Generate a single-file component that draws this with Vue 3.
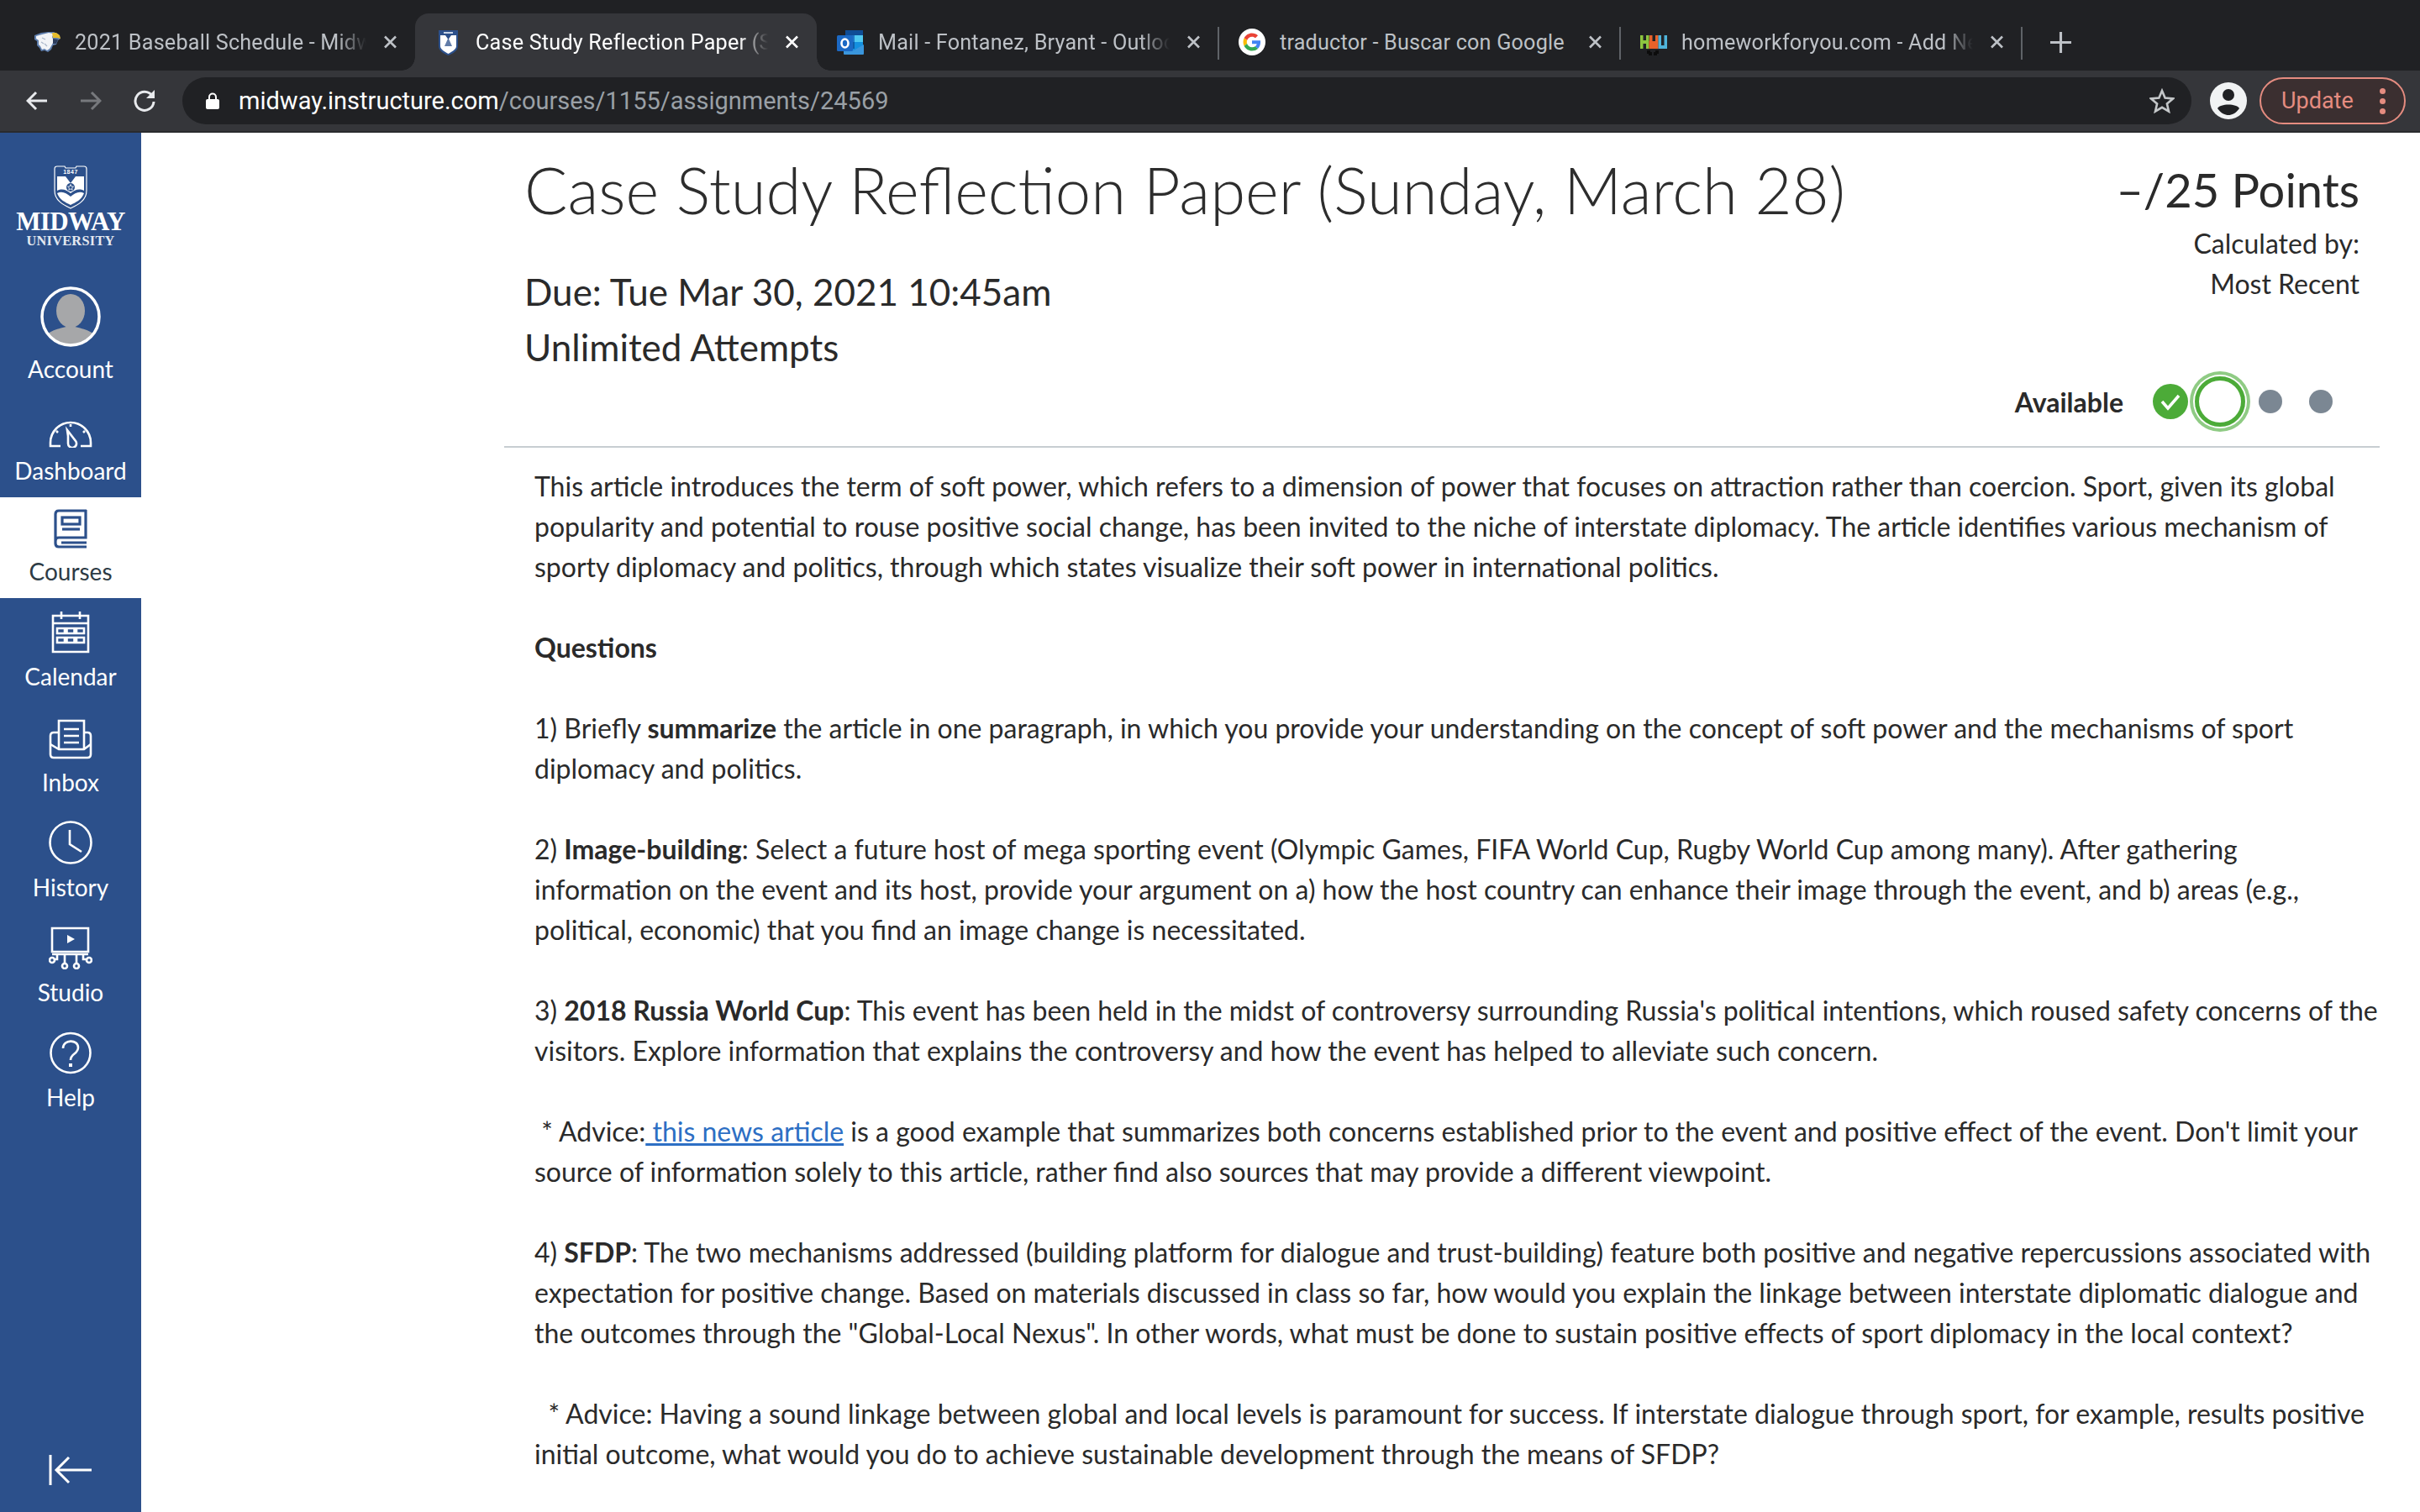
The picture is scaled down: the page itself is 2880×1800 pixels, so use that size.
<script setup>
const tabs = [
  { title: '2021 Baseball Schedule - Midway University Athletics', icon: 'eagle' },
  { title: 'Case Study Reflection Paper (Sunday, March 28)', icon: 'shield', active: true },
  { title: 'Mail - Fontanez, Bryant - Outlook Web', icon: 'outlook' },
  { title: 'traductor - Buscar con Google', icon: 'google', plain: true },
  { title: 'homeworkforyou.com - Add New Post', icon: 'hw' }
]
</script>

<template>
  <div class="screen">
    <header class="tabstrip">
      <div v-for="t in tabs" :key="t.icon" class="tab" :class="{ active: t.active, sep: t.icon === 'google' || t.icon === 'hw' || t.icon === 'outlook' }">
        <svg v-if="t.icon === 'eagle'" class="fav" viewBox="0 0 32 32">
          <path d="M1 8 L9 5 L17 4 L24 4 L30 7 L32 12 L29 14 L27 19 L23 20 L21 25 L17 28 L13 26 L9 27 L7 23 L4 20 L4 15 L1 13Z" fill="#5f7fae" />
          <path d="M3 9 L10 7 L18 5 L24 6 L22 10 L24 15 L22 19 L19 24 L16 26 L13 24 L10 25 L8 21 L6 19 L6 14 L3 12Z" fill="#f2f4f7" />
          <path d="M22 5 L27 5 L31 8 L32 12 L28 11 L23 11Z" fill="#e6bd2e" />
          <path d="M23 12 L29 13 L27 18 L23 18Z" fill="#2d3d5c" />
          <path d="M10 11 L14 13 M9 16 L12 18 M13 18 L16 21" stroke="#a9b6c9" stroke-width="1.200" fill="none" />
        </svg>
        <svg v-else-if="t.icon === 'shield'" class="fav shield" viewBox="0 0 23 31">
          <path d="M0 1 H23 V20 C23 26 16 29 11.500 31 C7 29 0 26 0 20Z" fill="#2c508b" />
          <path d="M2 7 H8 L11.500 12 L15 7 H21 V20 C21 24 15 27 11.500 29 C8 27 2 24 2 20Z" fill="#fff" />
          <path d="M11.500 10 L16 20 H7Z" fill="#2c508b" opacity=".75" />
          <path d="M6 3 H17 V5 H6Z" fill="#c7d3e6" />
        </svg>
        <svg v-else-if="t.icon === 'outlook'" class="fav" viewBox="0 0 32 32">
          <rect x="10" y="2" width="21" height="25" rx="1" fill="#1490df" />
          <rect x="10" y="2" width="21" height="6" fill="#0f4d96" />
          <rect x="21" y="8" width="10" height="8" fill="#50c8f0" />
          <rect x="10" y="8" width="11" height="8" fill="#1f78c8" />
          <rect x="10" y="16" width="11" height="8" fill="#0f5ea8" />
          <path d="M8 19 L20 26 L32 19 V30 Q32 31 31 31 H9 Q8 31 8 30Z" fill="#3a96dd" />
          <rect x="0" y="8" width="19" height="19" rx="1.500" fill="#1c69c4" />
          <ellipse cx="9.500" cy="17.500" rx="4" ry="5" fill="none" stroke="#fff" stroke-width="2.600" />
        </svg>
        <svg v-else-if="t.icon === 'google'" class="fav" viewBox="0 0 64 64">
          <circle cx="32" cy="32" r="32" fill="#fff" />
          <g transform="translate(11 11) scale(.875)">
            <path fill="#EA4335" d="M24 9.5c3.54 0 6.71 1.22 9.21 3.6l6.85-6.85C35.9 2.38 30.47 0 24 0 14.62 0 6.51 5.38 2.56 13.22l7.98 6.19C12.43 13.72 17.74 9.5 24 9.5z" />
            <path fill="#4285F4" d="M46.98 24.55c0-1.57-.15-3.09-.38-4.55H24v9.02h12.94c-.58 2.96-2.26 5.48-4.78 7.18l7.73 6c4.51-4.18 7.09-10.36 7.09-17.65z" />
            <path fill="#FBBC05" d="M10.53 28.59c-.48-1.45-.76-2.99-.76-4.59s.27-3.14.76-4.59l-7.98-6.19C.92 16.46 0 20.12 0 24c0 3.88.92 7.54 2.56 10.78l7.97-6.19z" />
            <path fill="#34A853" d="M24 48c6.48 0 11.93-2.13 16.06-5.81l-7.73-6c-2.15 1.45-4.92 2.3-8.33 2.3-6.26 0-11.57-4.22-13.47-9.91l-7.98 6.19C6.51 42.62 14.62 48 24 48z" />
          </g>
        </svg>
        <svg v-else class="fav" viewBox="0 0 32 32">
          <path d="M0 8 H3.500 V14 H7 V8 H10.500 V24 H7 V18 H3.500 V24 H0Z" fill="#8dc63f" />
          <path d="M10.500 15 H21.500 V24 H10.500Z M11 8 H14.500 V15 H11Z M18 8 H21.500 V15 H18Z" fill="#e8622a" />
          <path d="M21.500 8 H25 V20 H28.500 V8 H32 V24 H21.500Z" fill="#4fb3d9" />
          <path d="M8 26 H12 V28 H14 V32 H10 V30 H8Z M18 26 H22 V30 H20 V32 H16 V28 H18Z" fill="#0c0c0c" />
        </svg>
        <span class="tab-title">{{ t.title }}</span>
        <svg class="close" viewBox="0 0 16 16"><path d="M1.500 1.500 L14.500 14.500 M14.500 1.500 L1.500 14.500" /></svg>
      </div>
      <svg class="plus" viewBox="0 0 24 24"><path d="M12 0 V24 M0 12 H24" /></svg>
    </header>

    <div class="toolbar">
      <svg class="nav-arrow" viewBox="0 0 26 26"><path d="M25 13 H3 M12 3 L2 13 L12 23" /></svg>
      <svg class="nav-arrow dim" viewBox="0 0 26 26"><path d="M1 13 H23 M14 3 L24 13 L14 23" /></svg>
      <svg class="nav-arrow reload" viewBox="0 0 28 28"><path d="M23 8 A11 11 0 1 0 25 15" /><path class="solid" d="M26 1 V11 H16Z" /></svg>
      <div class="omnibox">
        <svg class="lock" viewBox="0 0 16 20"><path d="M4 9 V5.500 A4 4 0 0 1 12 5.500 V9" fill="none" stroke="#fff" stroke-width="2" /><rect y="8" width="16" height="12" rx="2" fill="#fff" /></svg>
        <span class="url"><span class="host">midway.instructure.com</span>/courses/1155/assignments/24569</span>
        <svg class="star" viewBox="0 0 30 30"><path d="M15 3 L18.600 11.600 L28 12.400 L20.900 18.500 L23 27.600 L15 22.800 L7 27.600 L9.100 18.500 L2 12.400 L11.400 11.600Z" /></svg>
      </div>
      <svg class="profile" viewBox="0 0 44 44">
        <circle cx="22" cy="22" r="22" fill="#f1f3f4" />
        <circle cx="22" cy="15" r="7" fill="#202124" />
        <path d="M9 31 C12 25 32 25 35 31 C31 37 26 39 22 39 C18 39 13 37 9 31Z" fill="#202124" />
      </svg>
      <div class="update">
        <span>Update</span>
        <span class="dots"><i></i><i></i><i></i></span>
      </div>
    </div>
    <div class="toolbar-edge"></div>

    <div class="page">
      <aside class="sidebar">
        <div class="logo">
          <svg class="crest" viewBox="0 0 40 52">
            <path d="M1 4 Q1 1 4 1 H13 L14 3 H26 L27 1 H36 Q39 1 39 4 V30 C39 42 28 47 20 51 C12 47 1 42 1 30Z" fill="none" stroke="#fff" stroke-width="1.200" />
            <text x="20" y="10" text-anchor="middle" class="crest-year">1847</text>
            <path d="M4 13 H14 L20 21 L26 13 H36 V30 C30 27 25 29 20 33 C15 29 10 27 4 30Z" fill="#fff" />
            <path d="M4 33 C10 30 15 33 20 37 C25 33 30 30 36 33 C33 41 26 44 20 47 C14 44 7 41 4 33Z" fill="#fff" />
            <circle cx="20" cy="26" r="5" fill="#2c508b" />
            <path d="M20 22.500 L21 25 L23.500 25.200 L21.600 26.800 L22.200 29.200 L20 27.900 L17.800 29.200 L18.400 26.800 L16.500 25.200 L19 25Z" fill="none" stroke="#fff" stroke-width=".8" />
          </svg>
          <div class="logo-name">MIDWAY</div>
          <div class="logo-sub">UNIVERSITY</div>
        </div>

        <nav class="nav">
          <a class="item account">
            <svg class="avatar" viewBox="0 0 72 72">
              <defs><clipPath id="av"><circle cx="36" cy="36" r="33" /></clipPath></defs>
              <g clip-path="url(#av)" fill="#a6a7a9">
                <ellipse cx="36" cy="29" rx="17" ry="20" />
                <path d="M6 72 V60 C12 50 28 50 36 46 C44 50 60 50 66 60 V72Z" />
              </g>
              <circle cx="36" cy="36" r="34" fill="none" stroke="#fff" stroke-width="3.500" />
            </svg>
            <span>Account</span>
          </a>
          <a class="item dash">
            <svg viewBox="0 0 52 33" width="52" height="33" class="ico">
              <path d="M14 31 H2 V27 A24 24 0 0 1 50 27 V31 H38" />
              <path d="M23 20 L22 13 L32 26 A5 5 0 1 1 23 29 Z" transform="translate(0 -1)" />
              <path d="M26 5 V8 M9 13 L11 15 M43 13 L41 15" />
            </svg>
            <span>Dashboard</span>
          </a>
          <a class="item short active">
            <svg viewBox="0 0 40 47" width="40" height="47" class="ico">
              <path d="M39 2 H6 Q2 2 2 6 V41 Q2 45 6 45 H39 M2 38 Q2 34 6 34 H38 V1 M39 40 H9" />
              <rect x="10" y="10" width="21" height="8" />
              <path d="M10 24 H31" />
            </svg>
            <span>Courses</span>
          </a>
          <a class="item">
            <svg viewBox="0 0 46 51" width="46" height="51" class="ico">
              <path d="M2 6 H44 V49 H2Z M2 15 H44 M12 1 V10 M34 1 V10" />
              <path d="M7 21 H16 V27 H7Z M18.500 21 H27.500 V27 H18.500Z M30 21 H39 V27 H30Z M7 32 H16 V38 H7Z M18.500 32 H27.500 V38 H18.500Z M30 32 H39 V38 H30Z" />
            </svg>
            <span>Calendar</span>
          </a>
          <a class="item">
            <svg viewBox="0 0 52 48" width="52" height="48" class="ico">
              <path d="M12 16 H6 Q2 16 2 20 V42 Q2 46 6 46 H46 Q50 46 50 42 V20 Q50 16 46 16 H42" />
              <path d="M12 36 V2 H42 V36 M2 30 L12 36 H42 L50 30" />
              <path d="M18 12 H36 M18 20 H36 M18 28 H36" />
            </svg>
            <span>Inbox</span>
          </a>
          <a class="item">
            <svg viewBox="0 0 52 52" width="52" height="52" class="ico">
              <circle cx="26" cy="26" r="24.500" />
              <path d="M25 11 V28 L39 37" />
            </svg>
            <span>History</span>
          </a>
          <a class="item">
            <svg viewBox="0 0 52 51" width="52" height="51" class="ico">
              <path d="M4 2 H47 V30 H4Z M4 33 H47" />
              <path class="solid" d="M22 10 L31 15 L22 20Z" />
              <path d="M10 33 V39 H6 M19 33 V43 M33 33 V43 M41 33 V39 H45" />
              <circle cx="4" cy="40" r="3" /><circle cx="19" cy="47" r="3" /><circle cx="33" cy="47" r="3" /><circle cx="48" cy="40" r="3" />
            </svg>
            <span>Studio</span>
          </a>
          <a class="item">
            <svg viewBox="0 0 50 51" width="50" height="51" class="ico">
              <circle cx="25" cy="25.500" r="23.500" />
              <path d="M16 20 C16 9 34 9 34 19 C34 27 25 26 25 34" />
              <path class="solid" d="M23 38 H27 V42 H23Z" />
            </svg>
            <span>Help</span>
          </a>
        </nav>

        <svg class="collapse" viewBox="0 0 52 36" width="52" height="36">
          <path d="M2 0 V36 M24 3 L9 18 L24 33 M9 18 H51" />
        </svg>
      </aside>

      <main class="content">
        <section class="head">
          <div class="head-left">
            <h1>Case Study Reflection Paper (Sunday, March 28)</h1>
            <div class="meta">Due: Tue Mar 30, 2021 10:45am</div>
            <div class="meta">Unlimited Attempts</div>
          </div>
          <div class="head-right">
            <div class="points">–/25 Points</div>
            <div class="calc">Calculated by:</div>
            <div class="calc">Most Recent</div>
            <div class="status">
              <strong>Available</strong>
              <span class="steps">
                <svg class="step-done" viewBox="0 0 42 42"><circle cx="21" cy="21" r="21" fill="#4cab38" /><path d="M11 21 L18 29 L31 14" fill="none" stroke="#fff" stroke-width="3.500" /></svg>
                <span class="step-current"></span>
                <span class="step-dot"></span>
                <span class="step-dot far"></span>
              </span>
            </div>
          </div>
        </section>

        <article class="body">
          <p>This article introduces the term of soft power, which refers to a dimension of power that focuses on attraction rather than coercion. Sport, given its global popularity and potential to rouse positive social change, has been invited to the niche of interstate diplomacy. The article identifies various mechanism of sporty diplomacy and politics, through which states visualize their soft power in international politics.</p>
          <p><strong>Questions</strong></p>
          <p>1) Briefly <strong>summarize</strong> the article in one paragraph, in which you provide your understanding on the concept of soft power and the mechanisms of sport diplomacy and politics.</p>
          <p>2) <strong>Image-building</strong>: Select a future host of mega sporting event (Olympic Games, FIFA World Cup, Rugby World Cup among many). After gathering information on the event and its host, provide your argument on a) how the host country can enhance their image through the event, and b) areas (e.g., political, economic) that you find an image change is necessitated.</p>
          <p>3) <strong>2018 Russia World Cup</strong>: This event has been held in the midst of controversy surrounding Russia's political intentions, which roused safety concerns of the visitors. Explore information that explains the controversy and how the event has helped to alleviate such concern.</p>
          <p>&nbsp;* Advice:<a>&nbsp;this news article</a> is a good example that summarizes both concerns established prior to the event and positive effect of the event. Don't limit your source of information solely to this article, rather find also sources that may provide a different viewpoint.</p>
          <p>4) <strong>SFDP</strong>: The two mechanisms addressed (building platform for dialogue and trust-building) feature both positive and negative repercussions associated with expectation for positive change. Based on materials discussed in class so far, how would you explain the linkage between interstate diplomatic dialogue and the outcomes through the "Global-Local Nexus". In other words, what must be done to sustain positive effects of sport diplomacy in the local context?</p>
          <p>&nbsp; * Advice: Having a sound linkage between global and local levels is paramount for success. If interstate dialogue through sport, for example, results positive initial outcome, what would you do to achieve sustainable development through the means of SFDP?</p>
        </article>
      </main>
    </div>
  </div>
</template>

<style>
html, body { margin: 0; overflow: hidden; background: #fff; }
</style>

<style scoped>
.screen {
  width: 2880px;
  height: 1800px;
  display: flex;
  flex-direction: column;
  overflow: hidden;
  font-family: Lato, "Liberation Sans", sans-serif;
  color: #2d3b45;
}
.tabstrip {
  height: 84px;
  background: #202124;
  display: flex;
  align-items: flex-end;
  padding-left: 16px;
  box-sizing: border-box;
  font-family: Roboto, "Liberation Sans", sans-serif;
  flex: none;
}
.tab {
  position: relative;
  width: 478px;
  height: 68px;
  display: flex;
  align-items: center;
  padding: 0 21px 0 24px;
  box-sizing: border-box;
  border-radius: 16px 16px 0 0;
  color: #bdc1c6;
  font-size: 25.200px;
}
.tab.active { background: #35363a; color: #fff; padding-left: 28px; }
.tab.active::before, .tab.active::after {
  content: "";
  position: absolute;
  bottom: 0;
  width: 16px;
  height: 16px;
}
.tab.active::before { left: -16px; background: radial-gradient(circle at 0 0, #202124 15.500px, #35363a 16px); }
.tab.active::after { right: -16px; background: radial-gradient(circle at 100% 0, #202124 15.500px, #35363a 16px); }
.tab.sep::after {
  content: "";
  position: absolute;
  right: -1px;
  top: 16px;
  height: 39px;
  width: 2px;
  background: #5f6368;
}
.fav { width: 32px; height: 32px; flex: none; margin-right: 17px; }
.fav.shield { width: 23px; height: 31px; margin-right: 21px; }
.tab-title {
  flex: 1;
  white-space: nowrap;
  overflow: hidden;
  -webkit-mask-image: linear-gradient(to right, #000 90%, transparent 100%);
  mask-image: linear-gradient(to right, #000 90%, transparent 100%);
  letter-spacing: 0.2px;
}
.tab:nth-child(4) .tab-title { -webkit-mask-image: none; mask-image: none; }
.close { width: 17px; height: 16px; flex: none; margin-left: 20px; fill: none; stroke: currentColor; stroke-width: 2.600; }
.plus { width: 25px; height: 25px; margin: 0 0 21px 34px; fill: none; stroke: #bdc1c6; stroke-width: 3; flex: none; }

.toolbar {
  height: 72px;
  background: #35363a;
  display: flex;
  align-items: center;
  box-sizing: border-box;
  padding-left: 31px;
  flex: none;
}
.toolbar-edge { height: 2px; background: #2a2b2e; flex: none; }
.nav-arrow { width: 26px; height: 26px; flex: none; margin-right: 38px; fill: none; stroke: #e8eaed; stroke-width: 3; }
.nav-arrow.dim { stroke: #77797d; }
.nav-arrow.reload { width: 28px; height: 28px; margin-right: 0; margin-left: -1px; }
.nav-arrow .solid { fill: #e8eaed; stroke: none; }
.omnibox {
  width: 2391px;
  height: 56px;
  margin-left: 31px;
  flex: none;
  background: #202124;
  border-radius: 28px;
  display: flex;
  align-items: center;
  padding-left: 28px;
  box-sizing: border-box;
  font-family: Roboto, "Liberation Sans", sans-serif;
}
.lock { width: 16px; height: 20px; flex: none; }
.url { margin-left: 23px; font-size: 29px; color: #9aa0a6; flex: 1; white-space: nowrap; }
.host { color: #fff; }
.star { width: 30px; height: 30px; margin-right: 20px; fill: none; stroke: #c4c7c9; stroke-width: 2.600; flex: none; }
.profile { width: 44px; height: 44px; margin-left: 22px; flex: none; }
.update {
  margin-left: 15px;
  width: 174px;
  height: 56px;
  box-sizing: border-box;
  border: 2px solid #e58c80;
  border-radius: 28px;
  background: #3b2f30;
  color: #e58c80;
  font: 27px/52px Roboto, "Liberation Sans", sans-serif;
  display: flex;
  align-items: center;
  padding-left: 24px;
  flex: none;
}
.dots { display: flex; flex-direction: column; gap: 5px; margin-left: 31px; }
.dots i { width: 7px; height: 7px; border-radius: 50%; background: #e58c80; display: block; }

.page { flex: 1; display: flex; min-height: 0; }
.sidebar {
  width: 168px;
  flex: none;
  background: #2c508b;
  color: #fff;
  display: flex;
  flex-direction: column;
  align-items: stretch;
}
.logo {
  height: 172px;
  display: flex;
  flex-direction: column;
  align-items: center;
  box-sizing: border-box;
  padding-top: 39px;
}
.crest { width: 40px; height: 52px; flex: none; }
.crest-year { font: 700 7px "Liberation Sans", sans-serif; fill: #fff; letter-spacing: .5px; }
.logo-name { font: 700 31px/26px "Liberation Serif", serif; margin-top: 2px; letter-spacing: -.6px; }
.logo-sub { font: 700 16.300px/14px "Liberation Serif", serif; margin-top: 3px; color: #e3e8f0; letter-spacing: .3px; }
.nav { display: flex; flex-direction: column; }
.item {
  height: 125.300px;
  display: flex;
  flex-direction: column;
  align-items: center;
  justify-content: flex-end;
  padding-bottom: 12px;
  box-sizing: border-box;
  font-size: 28px;
  line-height: 40px;
  color: #fff;
}
.item.account { height: 131px; padding-bottom: 2px; }
.item.dash { height: 131px; }
.item.short { height: 120px; }
.item.active { background: #fff; color: #2d3b45; }
.ico { flex: none; margin-bottom: 7px; fill: none; stroke: #fff; stroke-width: 2.600; }
.ico .solid { fill: #fff; stroke: none; }
.active .ico { stroke: #2c508b; stroke-width: 3.200; }
.avatar { width: 72px; height: 72px; flex: none; margin-bottom: 6px; }
.collapse {
  margin: auto auto 32px;
  fill: none;
  stroke: #fff;
  stroke-width: 3;
  flex: none;
}

.content { width: 2232px; margin-left: 432px; flex: none; min-width: 0; color: #2d3b45; }
.head {
  height: 375px;
  display: flex;
  justify-content: space-between;
  box-sizing: border-box;
  border-bottom: 2px solid #c7cdd1;
  padding: 20px 24px 0 24px;
}
h1 {
  font-weight: 300;
  font-size: 76px;
  line-height: 96px;
  margin: 0 0 40px;
  white-space: nowrap;
  color: #2d2d2d;
}
.meta { font-size: 44px; line-height: 66px; color: #2a2a2a; white-space: nowrap; }
.head-right { display: flex; flex-direction: column; align-items: flex-end; }
.points { font-size: 56px; line-height: 48px; margin: 24px 0 16px; color: #2a2a2a; white-space: nowrap; }
.calc { font-size: 32px; line-height: 48px; color: #2a2a2a; white-space: nowrap; }
.status { display: flex; align-items: center; margin: 77px 32px 0 0; height: 78px; color: #2a2a2a; font-size: 32px; }
.status strong { font-weight: 700; margin-right: 35px; }
.steps { display: flex; align-items: center; }
.step-done { width: 42px; height: 42px; flex: none; }
.step-current {
  width: 60px;
  height: 60px;
  box-sizing: border-box;
  margin: 0 16px 0 8px;
  border: 5px solid #4cab38;
  border-radius: 50%;
  box-shadow: 0 0 0 2px #fff, 0 0 0 6px #8fcb84;
  flex: none;
}
.step-dot { width: 28px; height: 28px; border-radius: 50%; background: #7b8793; flex: none; }
.step-dot.far { margin-left: 32px; }
.body { padding: 22px 0 0 36px; font-size: 32px; line-height: 48px; color: #2a2a2a; }
.body p { margin: 0 0 48px; }
.body strong { font-weight: 700; }
.body a { color: #2d6fc4; text-decoration: underline; }
</style>
